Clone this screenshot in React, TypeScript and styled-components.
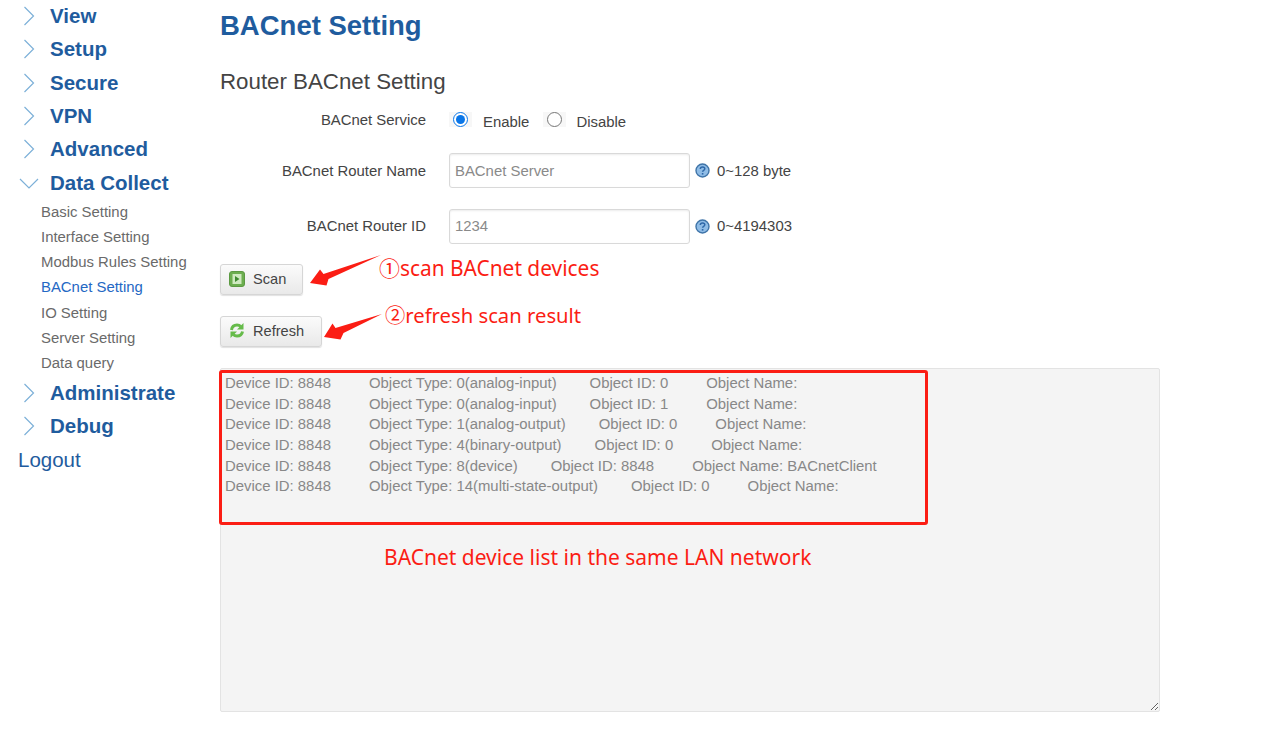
import React from 'react'
import styled, { createGlobalStyle } from 'styled-components'

const GlobalStyle = createGlobalStyle`
  html, body { margin: 0; padding: 0; background: #fff; }
  body { font-family: "Liberation Sans", Arial, sans-serif; }
`

const menuTop = ['View', 'Setup', 'Secure', 'VPN', 'Advanced']
const subMenu = ['Basic Setting', 'Interface Setting', 'Modbus Rules Setting', 'BACnet Setting', 'IO Setting', 'Server Setting', 'Data query']

const devices = [
  ['0(analog-input)', '0', ''],
  ['0(analog-input)', '1', ''],
  ['1(analog-output)', '0', ''],
  ['4(binary-output)', '0', ''],
  ['8(device)', '8848', 'BACnetClient'],
  ['14(multi-state-output)', '0', ''],
]

const Chevron = ({ open }: { open?: boolean }) => (
  <ChevronBox>
    <svg width="22" height="22" viewBox="0 0 22 22" fill="none" stroke="#7db0d8" strokeWidth="1.2">
      {open ? <path d="M2 7l9 9 9-9" /> : <path d="M6.500 2l9 9-9 9" />}
    </svg>
  </ChevronBox>
)

const HelpIcon = () => (
  <HelpBox>
    <svg width="15" height="15" viewBox="0 0 15 15">
      <circle cx="7.500" cy="7.500" r="6.500" fill="#8fbce6" stroke="#3f74a8" strokeWidth="1.400" />
      <path d="M5.300 6c0-1.400 1-2.100 2.300-2.100s2.200.8 2.200 1.900c0 1.500-2.200 1.500-2.200 3" fill="none" stroke="#2f68a8" strokeWidth="1.500" />
      <rect x="6.800" y="10" width="1.600" height="1.600" fill="#2f68a8" />
    </svg>
  </HelpBox>
)

const App = () => {
  return (
    <Page>
      <GlobalStyle />
      <Sidebar>
        {menuTop.map((m) => (
          <MenuItem key={m}>
            <Chevron />
            {m}
          </MenuItem>
        ))}
        <MenuItem>
          <Chevron open />
          Data Collect
        </MenuItem>
        <SubList>
          {subMenu.map((s) => (
            <SubItem key={s} $active={s === 'BACnet Setting'}>{s}</SubItem>
          ))}
        </SubList>
        <MenuItem>
          <Chevron />
          Administrate
        </MenuItem>
        <MenuItem>
          <Chevron />
          Debug
        </MenuItem>
        <Logout>Logout</Logout>
      </Sidebar>

      <Main>
        <Title>BACnet Setting</Title>
        <SubTitle>Router BACnet Setting</SubTitle>

        <RadioRow>
          <Label>BACnet Service</Label>
          <RadioBox><Radio type="radio" name="svc" defaultChecked /></RadioBox>
          <RadioText>Enable</RadioText>
          <RadioBox><Radio type="radio" name="svc" /></RadioBox>
          <RadioText>Disable</RadioText>
        </RadioRow>

        <FieldRow $top={18}>
          <Label>BACnet Router Name</Label>
          <TextInput placeholder="BACnet Server" />
          <HelpIcon />
          <Hint>0~128 byte</Hint>
        </FieldRow>
        <FieldRow $top={20.5}>
          <Label>BACnet Router ID</Label>
          <TextInput placeholder="1234" />
          <HelpIcon />
          <Hint>0~4194303</Hint>
        </FieldRow>

        <ActionButton $width={83} $top={20.5}>
          <svg width="16" height="16" viewBox="0 0 16 16">
            <rect x="0.5" y="0.5" width="15" height="15" rx="2.5" fill="#6cae4f" stroke="#5c9a42" />
            <rect x="3.5" y="3" width="9" height="10" fill="#cfeac0" />
            <path d="M6 5l4.500 3L6 11z" fill="#3f8a2f" />
          </svg>
          Scan
        </ActionButton>
        <ActionButton $width={102} $top={21}>
          <svg width="16" height="17" viewBox="0 0 16 17">
            <path d="M2.500 8C3 4.500 5.500 3 8 3c1.500 0 2.800.5 3.800 1.500" fill="none" stroke="#66bb4a" strokeWidth="3" />
            <path d="M14.500 1v6.500H8z" fill="#66bb4a" />
            <path d="M13.500 9.500C13 12.500 10.500 14 8 14c-1.500 0-2.800-.5-3.800-1.500" fill="none" stroke="#66bb4a" strokeWidth="3" />
            <path d="M1.500 16V9.500H8z" fill="#66bb4a" />
          </svg>
          Refresh
        </ActionButton>

        <ListBox>
          {devices.map(([type, id, name], i) => (
            <ListLine key={i}>
              <Cell $after={38}>Device ID: 8848</Cell>
              <Cell $after={33}>Object Type: {type}</Cell>
              <Cell $after={38}>Object ID: {id}</Cell>
              <Cell>Object Name:{name ? ` ${name}` : ''}</Cell>
            </ListLine>
          ))}
        </ListBox>
      </Main>

      <ArrowLayer width="1269" height="748" viewBox="0 0 1269 748">
        <path d="M381 255L328.500 279L326.500 285.500L310 283L320 269.500L323.500 274z" fill="#fb1d14" />
        <path d="M382 314L343.500 333L340.500 339.500L324 337L332.500 323.500L335.500 328z" fill="#fb1d14" />
      </ArrowLayer>
      <Note $left={379} $top={254} $size={20.9}>①scan BACnet devices</Note>
      <Note $left={385} $top={301} $size={20.25}>②refresh scan result</Note>
      <Note $left={384} $top={543} $size={21}>BACnet device list in the same LAN network</Note>
      <RedFrame />
    </Page>
  )
}

export default App

const Page = styled.div`
  position: relative;
  display: flex;
  width: 1269px;
  height: 748px;
  overflow: hidden;
`
const Sidebar = styled.nav`
  width: 220px;
  flex-shrink: 0;
  margin-top: -0.5px;
  padding-left: 18px;
  box-sizing: border-box;
`
const MenuItem = styled.div`
  display: flex;
  align-items: center;
  height: 33.3px;
  font-size: 20.500px;
  font-weight: bold;
  color: #1f5c9e;
`
const ChevronBox = styled.span`
  display: flex;
  justify-content: center;
  width: 22px;
  margin-right: 10px;
`
const SubList = styled.div`
  padding: 0.6px 0 0 23px;
`
const SubItem = styled.div<{ $active?: boolean }>`
  height: 25.17px;
  line-height: 25.17px;
  font-size: 14.900px;
  color: ${(p) => (p.$active ? '#2468c4' : '#6a6a6a')};
`
const Logout = styled.div`
  height: 33.3px;
  line-height: 33.3px;
  font-size: 20.500px;
  color: #1f5c9e;
`
const Main = styled.main`
  display: flex;
  flex-direction: column;
  align-items: flex-start;
  width: 940px;
`
const Title = styled.h1`
  margin: 10px 0 0;
  height: 32px;
  line-height: 32px;
  font-size: 27.500px;
  font-weight: bold;
  color: #1f5c9e;
`
const SubTitle = styled.h2`
  margin: 27px 0 0;
  height: 26px;
  line-height: 26px;
  font-size: 22.300px;
  font-weight: normal;
  color: #444;
`
const RadioRow = styled.div`
  display: flex;
  align-items: center;
  height: 30px;
  margin-top: 10px;
`
const FieldRow = styled.div<{ $top: number }>`
  display: flex;
  align-items: center;
  height: 35px;
  margin-top: ${(p) => p.$top}px;
`
const Label = styled.label`
  width: 206px;
  text-align: right;
  font-size: 14.900px;
  color: #444;
`
const RadioBox = styled.span`
  display: flex;
  align-items: center;
  justify-content: center;
  width: 23px;
  height: 15px;
  margin: -2px 0 0 23px;
  background: #f7f7f7;
  & ~ & { margin-left: 14px; }
`
const Radio = styled.input`
  width: 15px;
  height: 15px;
  margin: 0;
  accent-color: #0a76e8;
`
const RadioText = styled.span`
  margin: 3px 0 0 11px;
  font-size: 14.900px;
  color: #444;
  & ~ & { margin-left: 10px; }
`
const TextInput = styled.input`
  width: 241px;
  height: 35px;
  margin-left: 23px;
  padding: 0 5px;
  box-sizing: border-box;
  border: 1px solid #d9d9d9;
  border-radius: 3px;
  box-shadow: inset 0 1px 2px rgba(0, 0, 0, 0.08);
  font: 14.900px "Liberation Sans", Arial, sans-serif;
  &::placeholder { color: #8a8a8a; opacity: 1; }
`
const HelpBox = styled.span`
  display: flex;
  width: 15px;
  height: 15px;
  margin-left: 5px;
`
const Hint = styled.span`
  margin-left: 7px;
  font-size: 14.900px;
  color: #444;
`
const ActionButton = styled.button<{ $width: number; $top: number }>`
  display: flex;
  align-items: center;
  gap: 8px;
  width: ${(p) => p.$width}px;
  height: 31px;
  margin-top: ${(p) => p.$top}px;
  padding: 0 0 2px 8px;
  box-sizing: border-box;
  border: 1px solid #d6d6d6;
  border-radius: 3px;
  background: linear-gradient(#fbfbfb, #e9e9e9);
  box-shadow: 0 1px 1px rgba(0, 0, 0, 0.12);
  font: 14.600px "Liberation Sans", Arial, sans-serif;
  color: #444;
`
const ListBox = styled.div`
  width: 940px;
  height: 344px;
  margin-top: 21px;
  padding: 4px 4px 0;
  box-sizing: border-box;
  border: 1px solid #e3e3e3;
  border-radius: 2px;
  background: #f4f4f4;
  overflow: hidden;
  resize: both;
`
const ListLine = styled.div`
  display: flex;
  height: 20.700px;
  line-height: 20.700px;
  font-size: 14.900px;
  color: #888;
  white-space: pre;
`
const Cell = styled.span<{ $after?: number }>`
  margin-right: ${(p) => p.$after ?? 0}px;
`
const ArrowLayer = styled.svg`
  position: absolute;
  left: 0;
  top: 0;
  pointer-events: none;
`
const Note = styled.div<{ $left: number; $top: number; $size: number }>`
  position: absolute;
  left: ${(p) => p.$left}px;
  top: ${(p) => p.$top}px;
  font-family: "Noto Sans", "Noto Sans CJK SC", sans-serif;
  font-size: ${(p) => p.$size}px;
  line-height: 28px;
  color: #fb1d14;
  white-space: nowrap;
`
const RedFrame = styled.div`
  position: absolute;
  left: 219px;
  top: 370px;
  width: 709px;
  height: 155px;
  box-sizing: border-box;
  border: 3px solid #fb1d14;
  border-radius: 3px;
`
